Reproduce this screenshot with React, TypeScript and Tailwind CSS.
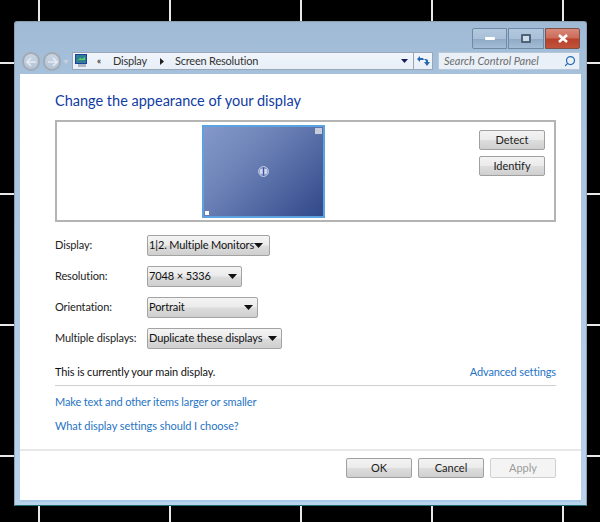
import React from "react";
import { Search } from "lucide-react";

const FONT = "font-['Lato',sans-serif]";

const Caret = () => (
  <svg width="9" height="5" viewBox="0 0 9 5" className="shrink-0">
    <path d="M0 0h9L4.5 5z" fill="#111" />
  </svg>
);

const NavButton = ({ flip }: { flip?: boolean }) => (
  <div className="flex h-[19px] w-[18px] shrink-0 items-center justify-center rounded-full border-2 border-[#a3aab3] bg-[linear-gradient(#c9d5e3,#b4c4d6)]">
    <svg width="11" height="10" viewBox="0 0 11 10" className={flip ? "rotate-180" : ""}>
      <path d="M5 1 1 5l4 4M1 5h9" fill="none" stroke="#e4ebf3" strokeWidth="1.6" />
    </svg>
  </div>
);

const Combo = ({ label, value, width, padRight }: { label: string; value: string; width: string; padRight: string }) => (
  <div className="flex h-[21px] items-center">
    <div className="w-[92px] whitespace-nowrap text-[11px] tracking-[-0.12px] text-[#222]">{label}</div>
    <div className={`flex h-[21px] items-center justify-between rounded-[2px] border border-[#a3a3a3] bg-[linear-gradient(#f4f4f4_0%,#ebebeb_48%,#dcdcdc_52%,#cfcfcf_100%)] pl-[1px] text-[11px] tracking-[-0.12px] text-[#111] ${width} ${padRight}`}>
      <span className="whitespace-nowrap">{value}</span>
      <Caret />
    </div>
  </div>
);

const DialogButton = ({ label, disabled }: { label: string; disabled?: boolean }) => (
  <div
    className={
      disabled
        ? "flex h-[20px] w-[66px] items-center justify-center rounded-[2px] border border-[#d0d0d0] bg-[#f4f4f4] text-[11px] text-[#9b9b9b]"
        : "flex h-[20px] w-[66px] items-center justify-center rounded-[2px] border border-[#a0a0a0] bg-[linear-gradient(#f3f3f3_0%,#ebebeb_48%,#dddddd_52%,#cfcfcf_100%)] text-[11px] text-[#222]"
    }
  >
    {label}
  </div>
);

export default function App() {
  return (
    <div
      className={`h-[522px] w-[600px] overflow-hidden bg-black bg-[linear-gradient(90deg,#e8e8e8_2px,transparent_2px),linear-gradient(#e8e8e8_2px,transparent_2px)] bg-[length:131px_131px] bg-[position:38px_62px] pl-[14px] pt-[21px] ${FONT}`}
    >
      <div className="flex h-[485px] w-[573px] flex-col rounded-t-[3px] border border-[#8c9fb2] border-b-[#1d6b70] bg-[linear-gradient(#a0bad6_0%,#a6c1dc_12%,#b9d3ec_100%)]">
        {/* Caption buttons */}
        <div className="flex h-[27px] shrink-0 justify-end pr-[6px] pt-[6px]">
          <div className="flex h-[21px] w-[35px] items-center justify-center rounded-l-[2px] border border-[#6f8aa6] bg-[linear-gradient(#b2c8de,#a9c0d8_50%,#8faac6_52%,#a4bcd6)]">
            <div className="h-[3px] w-[10px] rounded-[1px] bg-white" />
          </div>
          <div className="ml-px flex h-[21px] w-[36px] items-center justify-center border border-[#6f8aa6] bg-[linear-gradient(#b2c8de,#a9c0d8_50%,#8faac6_52%,#a4bcd6)]">
            <div className="h-[9px] w-[10px] rounded-[1px] border-2 border-[#4f6276] bg-[#cfdcea]" />
          </div>
          <div className="ml-px flex h-[21px] w-[35px] items-center justify-center rounded-r-[2px] border border-[#7c5148] bg-[linear-gradient(#d8897a,#cc6a58_48%,#b9402a_52%,#c0533c)]">
            <svg width="10" height="9" viewBox="0 0 10 9">
              <path d="M1 1l8 7M9 1 1 8" stroke="#fff" strokeWidth="2.6" />
            </svg>
          </div>
        </div>

        {/* Address bar */}
        <div className="flex h-[25px] shrink-0 items-start pl-[7px] pr-[6px] pt-[3px]">
          <NavButton />
          <div className="ml-[3px]">
            <NavButton flip />
          </div>
          <svg width="6" height="4" viewBox="0 0 6 4" className="ml-[2px] mt-[8px] shrink-0">
            <path d="M0 0h6L3 4z" fill="#c3d0de" />
          </svg>
          <div className="ml-[3px] flex h-[18px] w-[361px] shrink-0 items-center border border-[#9aa7b6] bg-[linear-gradient(#f0f5fb,#e8eff8)] text-[11px] tracking-[-0.2px] text-[#333]">
            <svg width="14" height="14" viewBox="0 0 14 14" className="ml-px shrink-0">
              <rect x="1" y="0" width="12" height="10" fill="#1f3f9e" />
              <rect x="2" y="1" width="10" height="8" fill="#2f7f94" />
              <path d="M3 7 6 4l2 1 3-2v3H3z" fill="#5fd05a" />
              <rect x="4" y="10" width="8" height="3" fill="#aeb8c4" />
            </svg>
            <span className="ml-[9px] text-[9px] font-bold">«</span>
            <span className="ml-[12px]">Display</span>
            <svg width="4" height="7" viewBox="0 0 4 7" className="ml-[13px] shrink-0">
              <path d="M0 0l4 3.5L0 7z" fill="#222" />
            </svg>
            <span className="ml-[11px] whitespace-nowrap">Screen Resolution</span>
            <div className="ml-auto flex items-center pr-[5px]">
              <svg width="7" height="4" viewBox="0 0 7 4">
                <path d="M0 0h7L3.5 4z" fill="#1a1a5a" />
              </svg>
            </div>
            <div className="flex h-full w-[19px] shrink-0 items-center justify-center border-l border-[#9aa7b6]">
              <svg width="13" height="12" viewBox="0 0 13 12">
                <path d="M0 4l3-3v2h3l1 2H3v2z" fill="#2767b0" />
                <path d="M13 7l-3 4-3-4h2V6L7 4h2l2 1v2z" fill="#2767b0" />
              </svg>
            </div>
          </div>
          <div className="ml-[5px] flex h-[18px] flex-1 items-center justify-between border border-[#b8c6d6] bg-[#e9f0f8] pl-[5px] pr-[3px] text-[11px] italic text-[#6d6d6d]">
            <span className="whitespace-nowrap">Search Control Panel</span>
            <Search size={12} strokeWidth={2.5} className="-scale-x-100 text-[#2b6cb5]" />
          </div>
        </div>

        {/* Client area */}
        <div className="mx-[5px] flex min-h-0 flex-1 flex-col border-b-2 border-[#a9c7e6] bg-white">
          <div className="flex flex-1 flex-col px-[35px] pt-[17px]">
            <h1 className="whitespace-nowrap text-[14.5px] font-normal leading-[20px] text-[#0f3ca3]">Change the appearance of your display</h1>

            {/* Monitor preview */}
            <div className="mt-[9px] flex h-[102px] w-[501px] shrink-0 border-2 border-[#b4b4b4]">
              <div className="ml-[145px] flex h-full w-[123px] shrink-0 items-center justify-center self-stretch">
                <div className="relative flex h-[93px] w-[123px] items-center justify-center border-2 border-[#5da2e0] bg-[linear-gradient(135deg,#8498c9_0%,#6e84b8_35%,#31488a_100%)]">
                  <svg width="11" height="11" viewBox="0 0 11 11">
                    <circle cx="5.5" cy="5.5" r="4.8" fill="#3b52a0" stroke="#e4e8f4" />
                    <path d="M4.8 2.2A3.3 3.3 0 0 0 4.8 8.8zM6.2 2.2A3.3 3.3 0 0 1 6.2 8.8z" fill="#cfd6ec" />
                  </svg>
                  <div className="absolute right-[1px] top-[1px] h-[6px] w-[7px] bg-[#c6ccd8]" />
                  <div className="absolute bottom-[1px] left-[1px] h-[4px] w-[4px] bg-white" />
                </div>
              </div>
              <div className="ml-auto mr-[9px] mt-[8px] flex flex-col gap-[6px]">
                <DialogButton label="Detect" />
                <DialogButton label="Identify" />
              </div>
            </div>

            {/* Settings */}
            <div className="mt-[13px] flex flex-col gap-[10px]">
              <Combo label="Display:" value="1|2. Multiple Monitors" width="w-[123px]" padRight="pr-[6px]" />
              <Combo label="Resolution:" value="7048 × 5336" width="w-[95px]" padRight="pr-[4px]" />
              <Combo label="Orientation:" value="Portrait" width="w-[111px]" padRight="pr-[4px]" />
              <Combo label="Multiple displays:" value="Duplicate these displays" width="w-[135px]" padRight="pr-[4px]" />
            </div>

            <div className="mt-[15px] flex w-[501px] items-center justify-between border-b border-[#cfcfcf] pb-[5px] text-[11px] leading-[16px] tracking-[-0.12px]">
              <span className="text-[#111]">This is currently your main display.</span>
              <span className="text-[#1f74c4]">Advanced settings</span>
            </div>
            <div className="mt-[8px] text-[11px] leading-[16px] tracking-[-0.12px] text-[#1f74c4]">Make text and other items larger or smaller</div>
            <div className="mt-[8px] text-[11px] leading-[16px] tracking-[-0.06px] text-[#1f74c4]">What display settings should I choose?</div>
          </div>

          {/* Footer */}
          <div className="flex h-[51px] shrink-0 justify-end gap-[6px] border-t-2 border-[#e8e8e8] pr-[25px] pt-[7px]">
            <DialogButton label="OK" />
            <DialogButton label="Cancel" />
            <DialogButton label="Apply" disabled />
          </div>
        </div>
        <div className="h-[3px] shrink-0" />
      </div>
    </div>
  );
}
